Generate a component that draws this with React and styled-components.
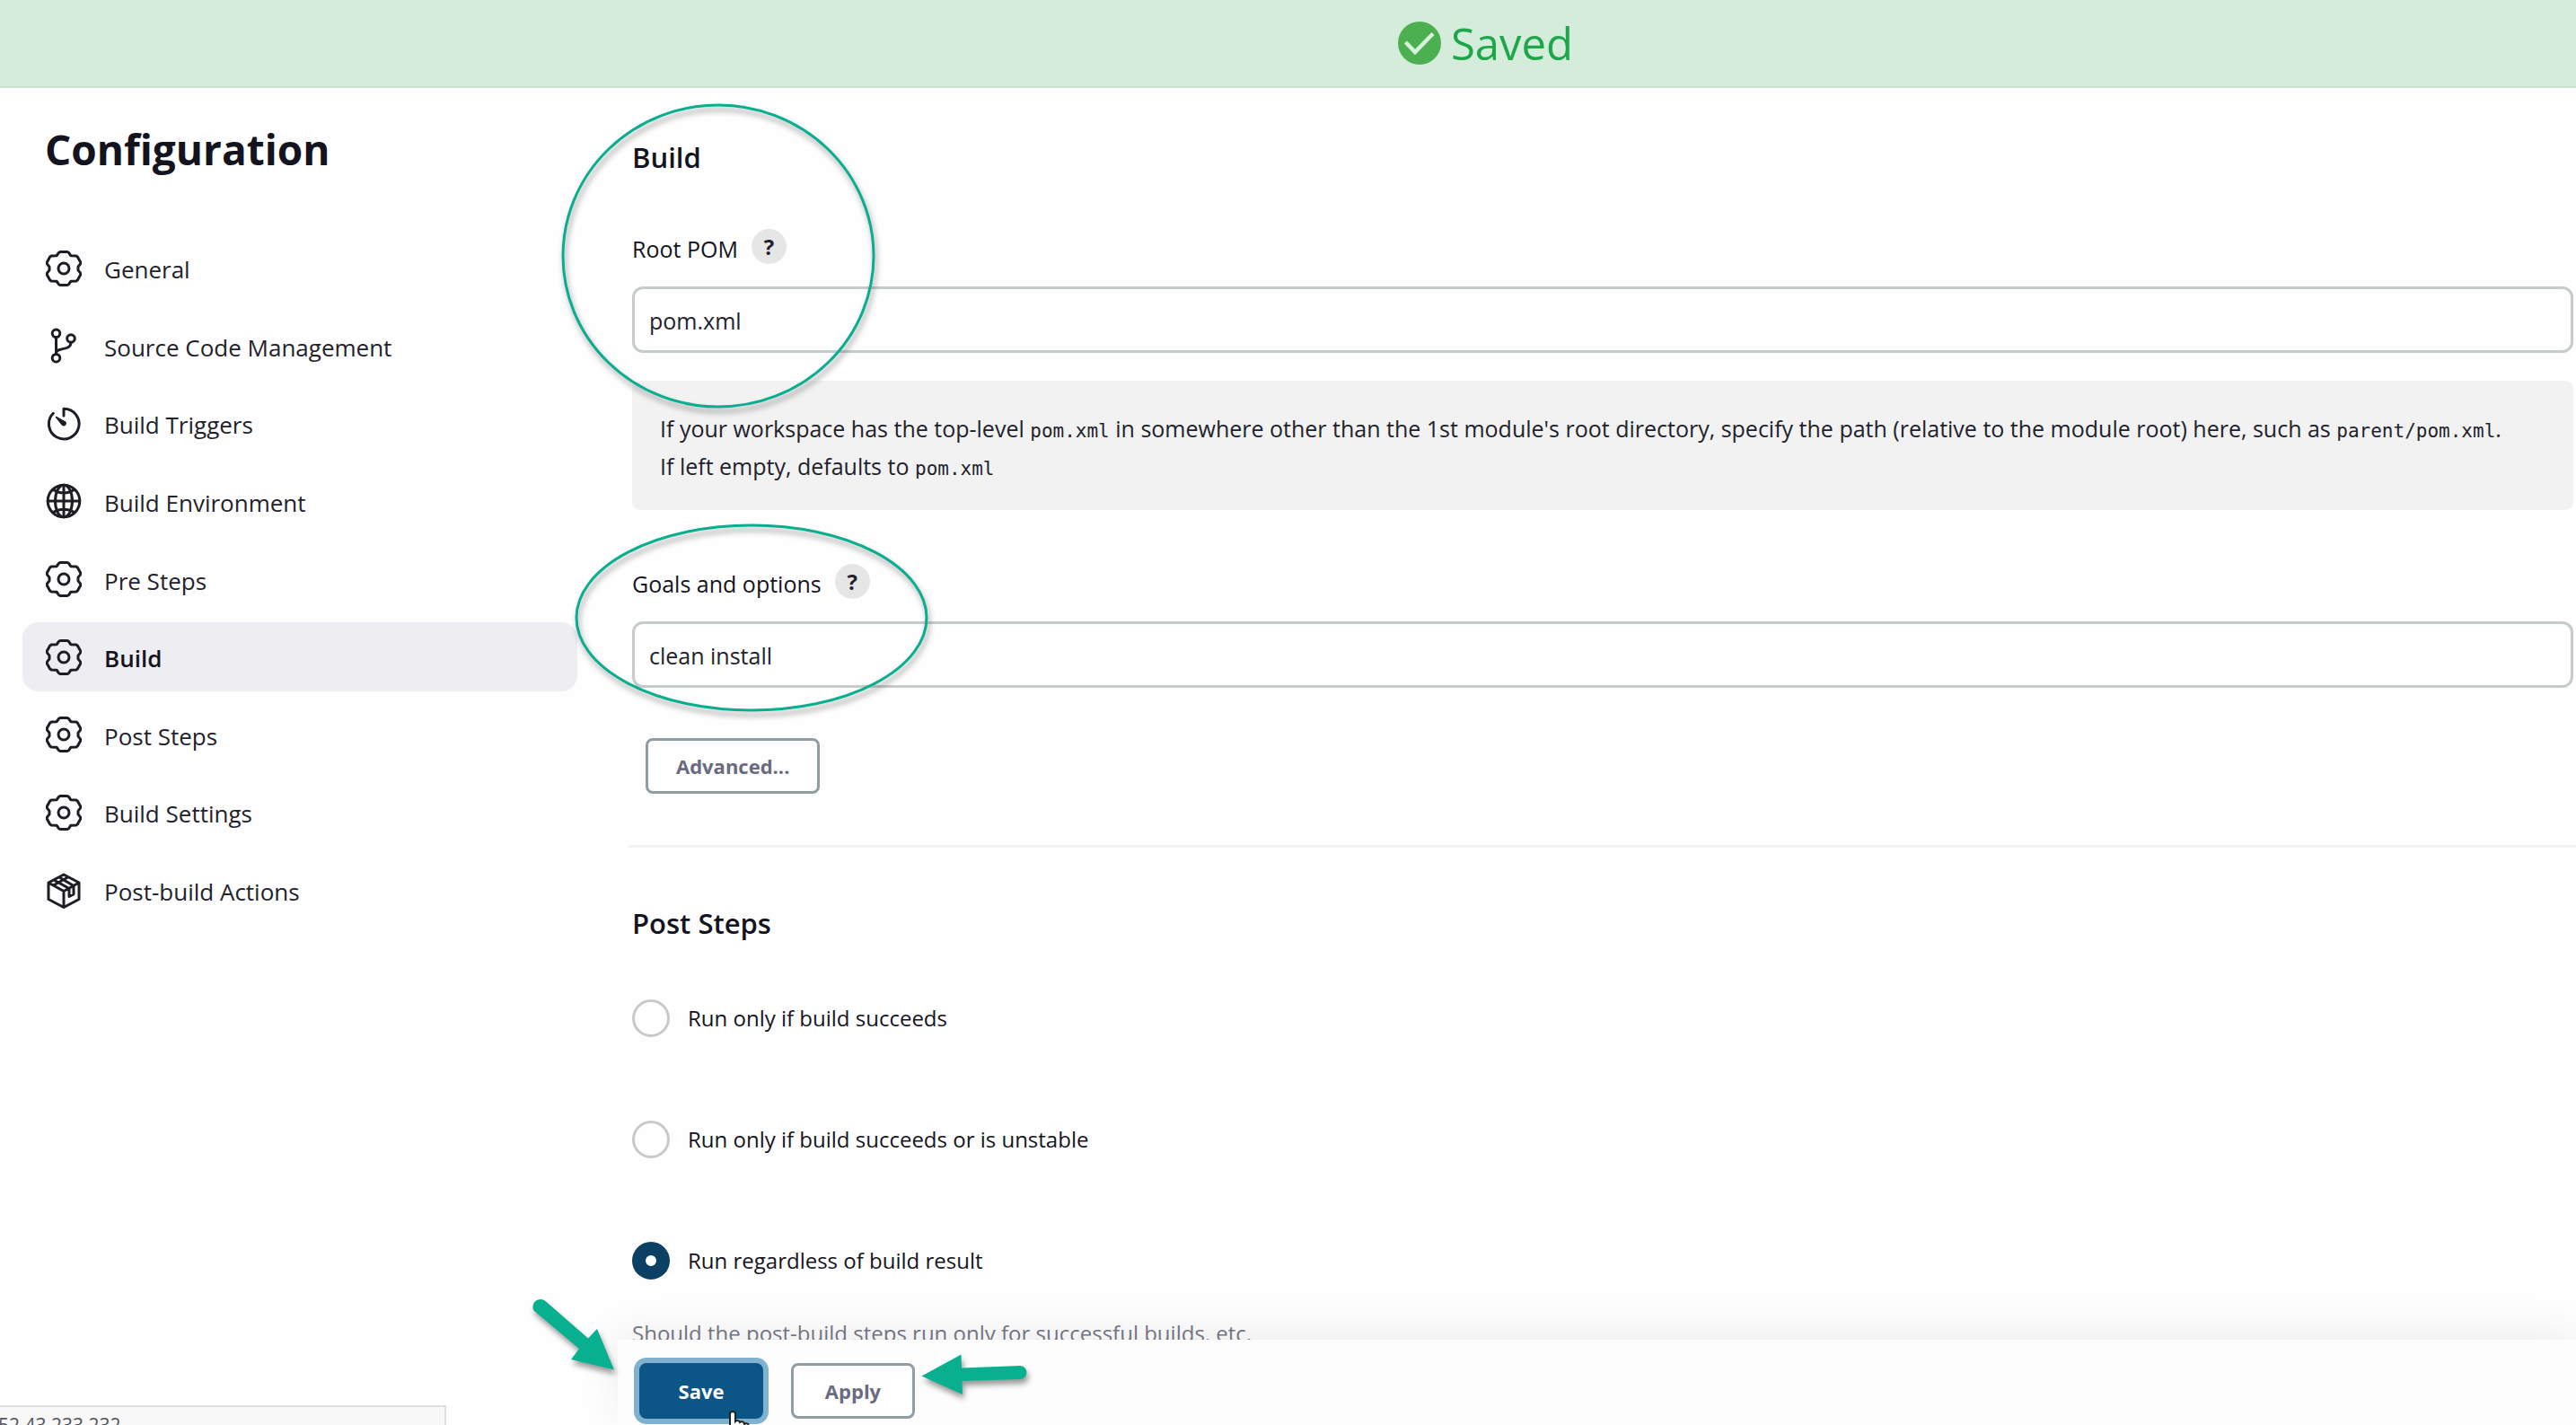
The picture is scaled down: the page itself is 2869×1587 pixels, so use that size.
import React, { useState } from 'react';
import styled, { createGlobalStyle, css } from 'styled-components';

const GlobalStyle = createGlobalStyle`
  *, *::before, *::after { box-sizing: border-box; }
  body {
    margin: 0;
    background: #fefefe;
    color: #14141f;
    font-family: "Open Sans", "Noto Sans", sans-serif;
    font-size: 24px;
  }
  button, input { font-family: inherit; }
`;

const Page = styled.div`
  position: relative;
  display: flex;
  flex-direction: column;
  height: 100vh;
  overflow: hidden;
`;

const Banner = styled.div`
  display: flex;
  flex: none;
  align-items: center;
  justify-content: center;
  gap: 11px;
  height: 98px;
  padding-left: 440px;
  background: #d4edda;
  border-bottom: 2px solid #cde3d1;
  color: #1ea64b;
  font-size: 49px;
  line-height: 60px;
`;

const Body = styled.div`
  display: flex;
  flex: 1;
  min-height: 0;
`;

const Sidebar = styled.aside`
  flex: none;
  width: 643px;
  padding: 38px 0 0 25px;
`;

const PageTitle = styled.h1`
  margin: 0 0 64px;
  padding-left: 25px;
  font-size: 46px;
  font-weight: 700;
  line-height: 60px;
`;

const NavList = styled.ul`
  display: flex;
  flex-direction: column;
  justify-content: space-between;
  height: 770px;
  margin: 0;
  padding: 0;
  list-style: none;
`;

const NavLink = styled.a`
  display: flex;
  align-items: center;
  gap: 25px;
  height: 77px;
  padding: 0 26px;
  border-radius: 18px;
  color: #22222c;
  font-size: 26px;
  line-height: 36px;
  text-decoration: none;
  ${({ $active }) =>
    $active &&
    css`
      background: #eeeef2;
      color: #14141f;
      font-weight: 600;
    `}
`;

const NavText = styled.span`
  padding-top: 3px;
`;

const Icon = styled.svg`
  flex: none;
  width: 40px;
  height: 40px;
  fill: none;
  stroke: #1d1d26;
  stroke-width: 3;
  stroke-linecap: round;
  stroke-linejoin: round;
`;

const Main = styled.main`
  display: flex;
  flex: 1;
  flex-direction: column;
  min-width: 0;
`;

const Form = styled.form`
  flex: 1;
  min-height: 0;
  overflow: hidden;
  padding: 57px 3px 0 61px;
`;

const SectionTitle = styled.h2`
  margin: 0;
  font-size: 31px;
  font-weight: 600;
  line-height: 40px;
`;

const Field = styled.div`
  margin-top: 60px;
`;

const LabelRow = styled.div`
  display: flex;
  align-items: flex-end;
  gap: 15px;
  height: 39px;
  margin-bottom: 25px;
`;

const Label = styled.label`
  font-size: 25px;
  line-height: 34px;
`;

const HelpButton = styled.button`
  width: 39px;
  height: 39px;
  padding: 0;
  border: 0;
  border-radius: 50%;
  background: #e6e6e6;
  color: #22222c;
  font-size: 24px;
  font-weight: 700;
  line-height: 38px;
`;

const TextInput = styled.input`
  display: block;
  width: 100%;
  height: 74px;
  padding: 2px 16px 0;
  border: 3px solid #c6cccc;
  border-radius: 12px;
  background: #fefefe;
  color: #22222c;
  font-size: 25px;
  outline: none;
`;

const HelpText = styled.div`
  margin-top: 31px;
  padding: 32px 31px 28px;
  border-radius: 9px;
  background: #f2f2f2;
  color: #22222c;
  font-size: 25px;
  line-height: 42px;
`;

const Code = styled.code`
  font-family: "DejaVu Sans Mono", monospace;
  font-size: 21px;
  line-height: 1;
`;

const Button = styled.button`
  min-width: 138px;
  height: 62px;
  padding: 0 31px;
  border: 3px solid #919da5;
  border-radius: 8px;
  background: #fefefe;
  color: #6a6a80;
  font-size: 22px;
  font-weight: 700;
  line-height: 32px;
  ${({ $primary }) =>
    $primary &&
    css`
      border-color: #0b5587;
      background: #0b5587;
      box-shadow: 0 0 0 6px #80b2d0;
      color: #fff;
    `}
`;

const AdvancedRow = styled.div`
  display: flex;
  margin-top: 56px;
  padding-left: 15px;
`;

const Divider = styled.hr`
  height: 3px;
  margin: 57px -3px 64px -4px;
  border: 0;
  background: #f2f3f4;
`;

const Options = styled.div`
  display: flex;
  flex-direction: column;
  gap: 93px;
  margin-top: 65px;
`;

const Option = styled.label`
  display: flex;
  align-items: center;
  gap: 20px;
  height: 42px;
  font-size: 24px;
  line-height: 34px;
`;

const Radio = styled.input`
  flex: none;
  width: 42px;
  height: 42px;
  margin: 0;
  border: 3px solid #c9c9c9;
  border-radius: 50%;
  appearance: none;
  background: #fefefe;
  &:checked {
    border: 15px solid #0b3f63;
  }
`;

const Description = styled.p`
  margin: 43px 0 0;
  color: #787888;
  font-size: 24px;
  line-height: 34px;
`;

const ActionBar = styled.div`
  position: relative;
  display: flex;
  flex: none;
  gap: 31px;
  height: 95px;
  margin-left: 45px;
  padding: 26px 0 0 24px;
  background: #fdfdfd;
  box-shadow: 0 -8px 48px rgba(0, 0, 0, 0.07);
`;

const StatusBubble = styled.div`
  position: absolute;
  bottom: 0;
  left: 0;
  width: 497px;
  height: 22px;
  overflow: hidden;
  border: solid #dfdfdf;
  border-width: 2px 2px 0 0;
  background: #f8f8f8;
  color: #55555c;
  font-size: 21px;
  line-height: 40px;
  text-indent: -2px;
`;

const Annotations = styled.svg`
  position: absolute;
  top: 0;
  left: 560px;
  width: 640px;
  height: 1587px;
  pointer-events: none;
  filter: drop-shadow(2px 5px 3px rgba(0, 0, 0, 0.4));
`;

const Pointer = styled.svg`
  position: absolute;
  top: 1570px;
  left: 804px;
  width: 36px;
  height: 44px;
  pointer-events: none;
`;

const Gear = () => (
  <Icon viewBox="0 0 40 40">
    <path d="M16 1.500h8l1.500.8 2.300 3.400 6 .2 1.500 1 3.500 6.300-.2 1.600-2.600 3.400v3.600l2.600 3.400.2 1.600-3.500 6.300-1.500 1-6 .2-2.300 3.400-1.500.8h-8l-1.500-.8-2.300-3.400-6-.2-1.500-1-3.500-6.300.2-1.600L4 21.800v-3.600l-2.600-3.400-.2-1.600 3.500-6.300 1.500-1 6-.2 2.300-3.400z" />
    <circle cx="20" cy="20" r="6" />
  </Icon>
);

const Branch = () => (
  <Icon viewBox="0 0 40 40">
    <circle cx="11.500" cy="6.300" r="4.300" />
    <circle cx="28" cy="12" r="4.300" />
    <circle cx="11.500" cy="33.700" r="4.300" />
    <path d="M11.500 10.600v18.800M28 16.300c0 10-16.500 5-16.500 12" />
  </Icon>
);

const Timer = () => (
  <Icon viewBox="0 0 40 40">
    <path d="M20 11V3.300A16.800 16.800 0 1 1 8.300 8.300" />
    <path d="M11.500 12.500l10.300 5.600a2.300 2.300 0 0 1-3 3.300z" fill="#1d1d26" strokeWidth="1.500" />
  </Icon>
);

const Globe = () => (
  <Icon viewBox="0 0 40 40">
    <circle cx="20" cy="20" r="17.800" />
    <ellipse cx="20" cy="20" rx="9.500" ry="17.800" />
    <path d="M20 2.200v35.600M2.200 20h35.600M8.500 7.500c6.500 4.500 16.500 4.500 23 0M8.500 32.500c6.500-4.500 16.500-4.500 23 0" />
  </Icon>
);

const Package = () => (
  <Icon viewBox="0 0 40 40">
    <path d="M20 2L37 11v18.500L20 38.500 3 29.500V11zM3 11l17 9.500L37 11M20 20.500v18M9 8l17 9.500v9l5-2.500v-9.500L15 5M8.500 14l8-4.500 8-4.500" />
  </Icon>
);

const navItems = [
  ['General', Gear],
  ['Source Code Management', Branch],
  ['Build Triggers', Timer],
  ['Build Environment', Globe],
  ['Pre Steps', Gear],
  ['Build', Gear],
  ['Post Steps', Gear],
  ['Build Settings', Gear],
  ['Post-build Actions', Package],
];

const runOptions = [
  'Run only if build succeeds',
  'Run only if build succeeds or is unstable',
  'Run regardless of build result',
];

function TextField({ id, label, defaultValue, children }) {
  return (
    <Field>
      <LabelRow>
        <Label htmlFor={id}>{label}</Label>
        <HelpButton type="button" aria-label={`Help for ${label}`}>?</HelpButton>
      </LabelRow>
      <TextInput id={id} type="text" defaultValue={defaultValue} />
      {children}
    </Field>
  );
}

export default function App() {
  const [choice, setChoice] = useState(2);
  return (
    <Page>
      <GlobalStyle />
      <Banner role="status">
        <svg width="48" height="48" viewBox="0 0 48 48">
          <circle cx="24" cy="24" r="24" fill="#4caf50" />
          <path d="M8.500 23l10.500 11L39 13.500" fill="none" stroke="#d9f0dc" strokeWidth="4.500" />
        </svg>
        <span>Saved</span>
      </Banner>
      <Body>
        <Sidebar>
          <PageTitle>Configuration</PageTitle>
          <nav>
            <NavList>
              {navItems.map(([name, Glyph]) => (
                <li key={name}>
                  <NavLink href="#" $active={name === 'Build'}>
                    <Glyph />
                    <NavText>{name}</NavText>
                  </NavLink>
                </li>
              ))}
            </NavList>
          </nav>
        </Sidebar>
        <Main>
          <Form id="config">
            <SectionTitle>Build</SectionTitle>
            <TextField id="root-pom" label="Root POM" defaultValue="pom.xml">
              <HelpText>
                If your workspace has the top-level <Code>pom.xml</Code> in somewhere other than the 1st
                module's root directory, specify the path (relative to the module root) here, such
                as <Code>parent/pom.xml</Code>.<br />
                If left empty, defaults to <Code>pom.xml</Code>
              </HelpText>
            </TextField>
            <TextField id="goals" label="Goals and options" defaultValue="clean install" />
            <AdvancedRow>
              <Button type="button">Advanced...</Button>
            </AdvancedRow>
            <Divider />
            <SectionTitle>Post Steps</SectionTitle>
            <Options>
              {runOptions.map((text, index) => (
                <Option key={text}>
                  <Radio
                    type="radio"
                    name="run"
                    checked={choice === index}
                    onChange={() => setChoice(index)}
                  />
                  {text}
                </Option>
              ))}
            </Options>
            <Description>Should the post-build steps run only for successful builds, etc.</Description>
          </Form>
          <ActionBar>
            <Button type="submit" form="config" $primary>Save</Button>
            <Button type="button">Apply</Button>
          </ActionBar>
        </Main>
      </Body>
      <StatusBubble>52.43.233.232</StatusBubble>
      <Annotations viewBox="560 0 640 1587">
        <g fill="none" stroke="#08ae8f" strokeWidth="3">
          <ellipse cx="800" cy="285" rx="173" ry="168" />
          <ellipse cx="837" cy="688" rx="195" ry="103" />
        </g>
        <g fill="#08b090">
          <path d="M594.500 1459.500A8.500 8.500 0 0 1 607.500 1449L655 1490.500 665 1480 684 1525.500 636 1514 645 1502z" />
          <path d="M1026.500 1532.500L1070.500 1508.500 1071 1523.500 1136 1521A7.500 7.500 0 0 1 1136 1536L1071.500 1538 1072 1553z" />
        </g>
      </Annotations>
      <Pointer viewBox="0 0 36 44">
        <path
          d="M9 20V5a3 3 0 0 1 6 0v8a3 3 0 0 1 5 1 3 3 0 0 1 5 2 3 3 0 0 1 5 2v14l-4 10H13L3 26c-1-4 4-5 6-2z"
          fill="#fff"
          stroke="#222"
          strokeWidth="2"
        />
      </Pointer>
    </Page>
  );
}
